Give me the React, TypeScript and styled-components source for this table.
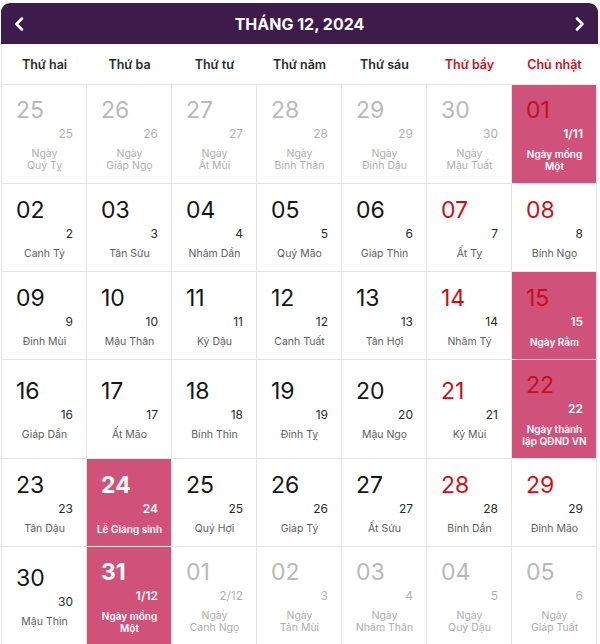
import React from 'react'
import styled, { createGlobalStyle } from 'styled-components'

const GlobalStyle = createGlobalStyle`
  html, body {
    margin: 0;
    padding: 0;
    background: #fff;
  }
  body {
    font-family: Inter, 'Noto Sans', 'Liberation Sans', sans-serif;
  }
`

const CALENDAR = styled.div`
  width: 596px;
  margin: 3px 0 0 1px;
`

const HEADER = styled.div`
  height: 41px;
  margin-right: -1px;
  display: flex;
  align-items: center;
  justify-content: space-between;
  padding: 0 11px;
  box-sizing: border-box;
  background: #3d1b4b;
  border-radius: 9px 9px 0 0;
  color: #fff;
`

const TITLE = styled.div`
  font-size: 16px;
  font-weight: 700;
`

const NAV = styled.button`
  background: none;
  border: none;
  padding: 0;
  width: 14px;
  height: 20px;
  display: flex;
  align-items: center;
  justify-content: center;
  cursor: pointer;
`

const GRID = styled.div`
  display: grid;
  grid-template-columns: repeat(7, 85px);
  border-left: 1px solid #e6e6e6;
`

const WEEKDAY = styled.div<{ $weekend?: boolean }>`
  height: 40px;
  display: flex;
  align-items: center;
  justify-content: center;
  font-size: 12.5px;
  font-weight: 600;
  color: ${({ $weekend }) => ($weekend ? '#c8111a' : '#2a2a2a')};
  border-bottom: 1px solid #e6e6e6;
  &:last-child {
    border-right: 1px solid #e6e6e6;
  }
`

const CELL = styled.div<{ $active?: boolean }>`
  display: flex;
  flex-direction: column;
  justify-content: center;
  padding: 12px 13px 11px 14px;
  border-right: 1px solid #e6e6e6;
  border-bottom: 1px solid #e6e6e6;
  background: ${({ $active }) => ($active ? '#d0527a' : '#fff')};
  min-height: 64px;
`

const DAY_NUM = styled.div<{ $color: string; $bold?: boolean }>`
  font-size: 23px;
  line-height: 26px;
  font-weight: ${({ $bold }) => ($bold ? 700 : 400)};
  color: ${({ $color }) => $color};
`

const LUNAR_NUM = styled.div<{ $color: string; $bold?: boolean }>`
  margin-top: 4px;
  text-align: right;
  font-size: 12px;
  line-height: 14px;
  font-weight: ${({ $bold }) => ($bold ? 600 : 400)};
  color: ${({ $color }) => $color};
`

const LUNAR_NAME = styled.div<{ $color: string; $bold?: boolean }>`
  margin: 7px -6px 0;
  text-align: center;
  font-size: ${({ $bold }) => ($bold ? '10px' : '10.5px')};
  line-height: 12px;
  font-weight: ${({ $bold }) => ($bold ? 600 : 400)};
  color: ${({ $color }) => $color};
  white-space: nowrap;
`

type Kind = 'out' | 'normal' | 'weekend' | 'event' | 'eventSun'

interface IDay {
  day: string
  lunar: string
  name: string[]
  kind: Kind
}

const WEEKDAYS = ['Thứ hai', 'Thứ ba', 'Thứ tư', 'Thứ năm', 'Thứ sáu', 'Thứ bẩy', 'Chủ nhật']

const o = (day: string, lunar: string, name: string): IDay => ({ day, lunar, name: ['Ngày', name], kind: 'out' })
const n = (day: string, lunar: string, name: string): IDay => ({ day, lunar, name: [name], kind: 'normal' })
const w = (day: string, lunar: string, name: string): IDay => ({ day, lunar, name: [name], kind: 'weekend' })
const e = (day: string, lunar: string, name: string[], sun = false): IDay => ({
  day,
  lunar,
  name,
  kind: sun ? 'eventSun' : 'event'
})

const DAYS: IDay[] = [
  o('25', '25', 'Quý Tỵ'),
  o('26', '26', 'Giáp Ngọ'),
  o('27', '27', 'Ất Mùi'),
  o('28', '28', 'Bính Thân'),
  o('29', '29', 'Đinh Dậu'),
  o('30', '30', 'Mậu Tuất'),
  e('01', '1/11', ['Ngày mồng', 'Một'], true),

  n('02', '2', 'Canh Tý'),
  n('03', '3', 'Tân Sửu'),
  n('04', '4', 'Nhâm Dần'),
  n('05', '5', 'Quý Mão'),
  n('06', '6', 'Giáp Thìn'),
  w('07', '7', 'Ất Tỵ'),
  w('08', '8', 'Bính Ngọ'),

  n('09', '9', 'Đinh Mùi'),
  n('10', '10', 'Mậu Thân'),
  n('11', '11', 'Kỷ Dậu'),
  n('12', '12', 'Canh Tuất'),
  n('13', '13', 'Tân Hợi'),
  w('14', '14', 'Nhâm Tý'),
  e('15', '15', ['Ngày Rằm'], true),

  n('16', '16', 'Giáp Dần'),
  n('17', '17', 'Ất Mão'),
  n('18', '18', 'Bính Thìn'),
  n('19', '19', 'Đinh Tỵ'),
  n('20', '20', 'Mậu Ngọ'),
  w('21', '21', 'Kỷ Mùi'),
  e('22', '22', ['Ngày thành', 'lập QĐND VN'], true),

  n('23', '23', 'Tân Dậu'),
  e('24', '24', ['Lễ Giáng sinh']),
  n('25', '25', 'Quý Hợi'),
  n('26', '26', 'Giáp Tý'),
  n('27', '27', 'Ất Sửu'),
  w('28', '28', 'Bính Dần'),
  w('29', '29', 'Đinh Mão'),

  n('30', '30', 'Mậu Thìn'),
  e('31', '1/12', ['Ngày mồng', 'Một']),
  o('01', '2/12', 'Canh Ngọ'),
  o('02', '3', 'Tân Mùi'),
  o('03', '4', 'Nhâm Thân'),
  o('04', '5', 'Quý Dậu'),
  o('05', '6', 'Giáp Tuất')
]

const COLORS: Record<Kind, { day: string; lunar: string; name: string }> = {
  out: { day: '#b9b9b9', lunar: '#b3b3b3', name: '#aeaeae' },
  normal: { day: '#161616', lunar: '#2a2a2a', name: '#606060' },
  weekend: { day: '#c8111a', lunar: '#2a2a2a', name: '#606060' },
  event: { day: '#ffffff', lunar: '#ffffff', name: '#ffffff' },
  eventSun: { day: '#c4101c', lunar: '#ffffff', name: '#ffffff' }
}

const Chevron = ({ dir }: { dir: 'left' | 'right' }) => (
  <svg width="10" height="14" viewBox="0 0 10 14">
    <polyline
      points={dir === 'left' ? '8,1.5 2.5,7 8,12.5' : '2,1.5 7.5,7 2,12.5'}
      fill="none"
      stroke="#fff"
      strokeWidth="2.6"
      strokeLinecap="round"
      strokeLinejoin="round"
    />
  </svg>
)

const DayCell = ({ d }: { d: IDay }) => {
  const c = COLORS[d.kind]
  const active = d.kind === 'event' || d.kind === 'eventSun'
  return (
    <CELL $active={active}>
      <DAY_NUM $color={c.day} $bold={d.kind === 'event'}>
        {d.day}
      </DAY_NUM>
      <LUNAR_NUM $color={c.lunar} $bold={active}>
        {d.lunar}
      </LUNAR_NUM>
      <LUNAR_NAME $color={c.name} $bold={active}>
        {d.name.map((line, i) => (
          <div key={i}>{line}</div>
        ))}
      </LUNAR_NAME>
    </CELL>
  )
}

export default function App() {
  return (
    <>
      <GlobalStyle />
      <CALENDAR>
        <HEADER>
          <NAV aria-label="Tháng trước">
            <Chevron dir="left" />
          </NAV>
          <TITLE>THÁNG 12, 2024</TITLE>
          <NAV aria-label="Tháng sau">
            <Chevron dir="right" />
          </NAV>
        </HEADER>
        <GRID>
          {WEEKDAYS.map((wd, i) => (
            <WEEKDAY key={wd} $weekend={i >= 5}>
              {wd}
            </WEEKDAY>
          ))}
          {DAYS.map((d, i) => (
            <DayCell key={i} d={d} />
          ))}
        </GRID>
      </CALENDAR>
    </>
  )
}
